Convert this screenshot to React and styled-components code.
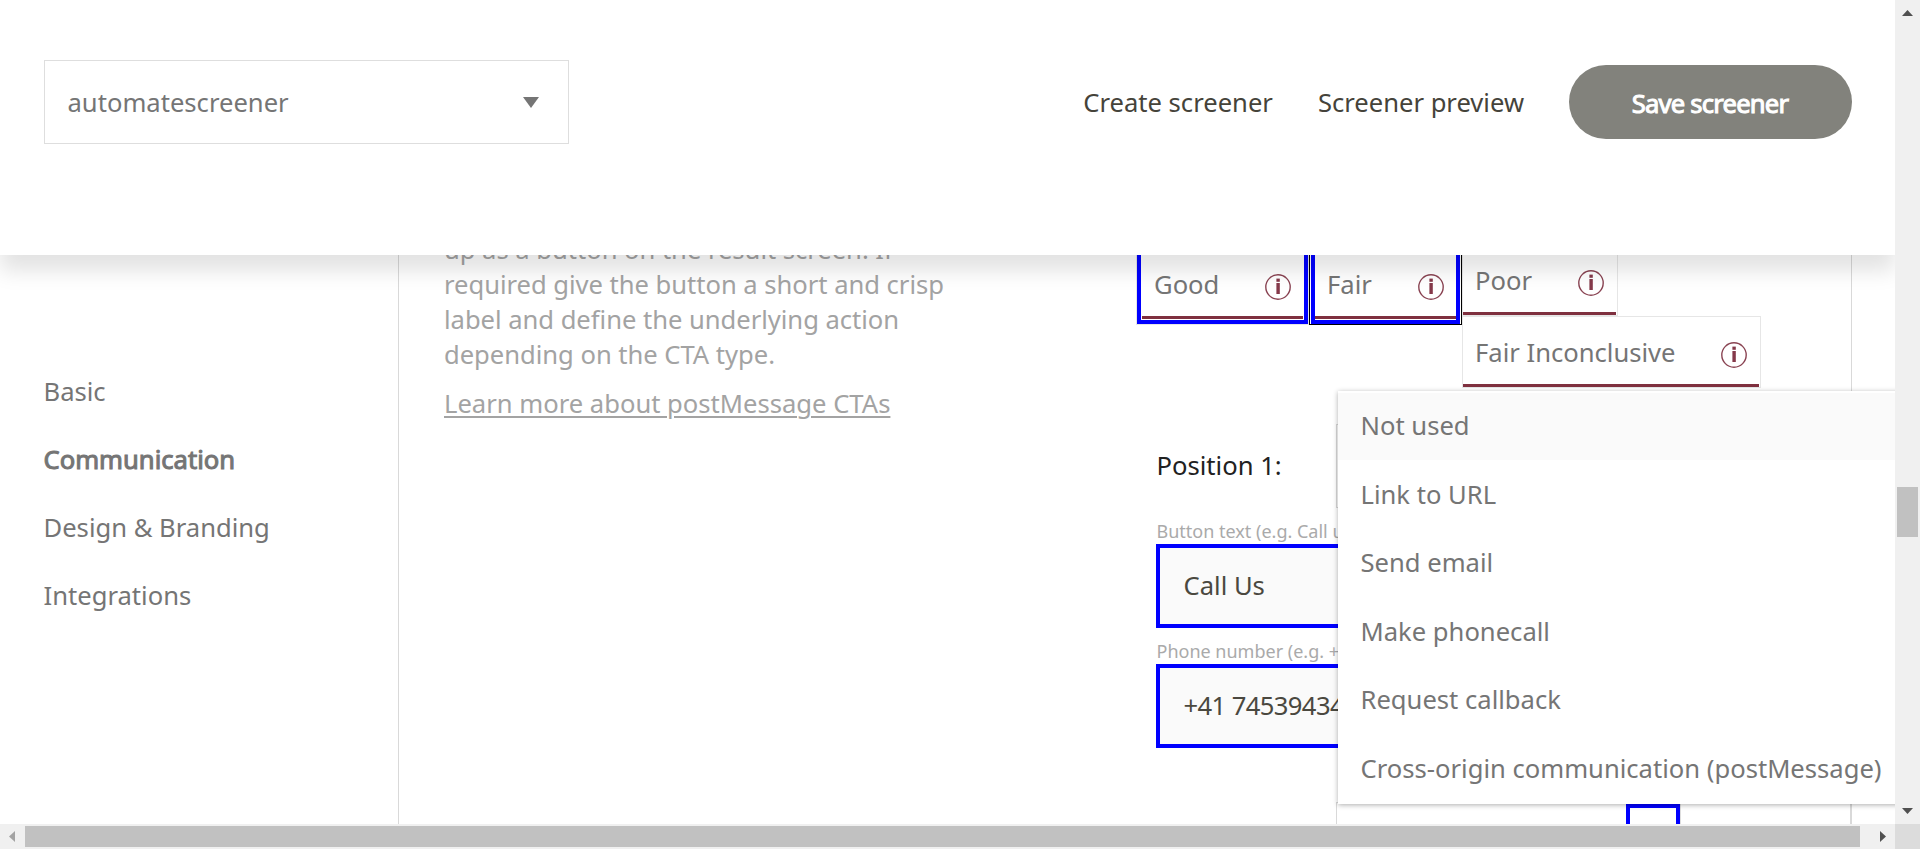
import React from "react";
import styled, { createGlobalStyle, css } from "styled-components";

const GlobalStyle = createGlobalStyle`
  * { box-sizing: border-box; }
  body {
    margin: 0;
    overflow: hidden;
    background: #fff;
    font-family: "Noto Sans", sans-serif;
    font-size: 25.6px;
    color: #757575;
  }
`;

const fauxBold = css`
  -webkit-text-stroke: 1px currentColor;
`;

const Window = styled.div`
  display: grid;
  grid-template: 824px 25px / 1895px 25px;
  width: 1920px;
  height: 849px;
`;

const Page = styled.div`
  display: flex;
  flex-direction: column;
  overflow: hidden;
`;

const Header = styled.header`
  position: relative;
  z-index: 2;
  flex: none;
  display: flex;
  align-items: flex-start;
  justify-content: space-between;
  height: 255px;
  padding: 60px 43px 0 44px;
  background: #fff;
  box-shadow: 0 16px 20px rgba(0, 0, 0, 0.115);
`;

const ScreenerSelect = styled.div`
  display: flex;
  align-items: center;
  justify-content: space-between;
  width: 525px;
  height: 84px;
  padding: 0 29px 0 22.5px;
  border: 1px solid #dedede;
`;

const Actions = styled.div`
  display: flex;
  align-items: center;
  gap: 45px;
  height: 84px;
  color: #45433a;
`;

const SaveButton = styled.button`
  width: 283px;
  height: 74px;
  padding: 2px 1px 0 0;
  border: 0;
  border-radius: 37px;
  background: #82827c;
  color: #fff;
  font: inherit;
  letter-spacing: -0.8px;
  ${fauxBold}
`;

const Body = styled.div`
  flex: 1;
  min-height: 0;
  display: flex;
`;

const Sidebar = styled.nav`
  flex: none;
  display: flex;
  flex-direction: column;
  width: 399px;
  padding: 103px 0 0 43.5px;
  border-right: 1px solid #d9d9d9;
`;

const NavItem = styled.a`
  height: 68px;
  line-height: 68px;
  ${(p) => p.$active && fauxBold}
`;

const Description = styled.section`
  flex: none;
  width: 545px;
  margin: -23px 0 0 45px;
  line-height: 35px;
  color: #a3a3a3;
`;

const Paragraph = styled.p`
  margin: 0 0 14px;
  letter-spacing: -0.03px;
  white-space: pre-line;
`;

const DocLink = styled.a`
  text-decoration: underline;
  text-decoration-thickness: 2px;
  text-underline-offset: 3px;
`;

const Content = styled.section`
  position: relative;
  flex: none;
  width: 716px;
  height: 569px;
  margin-left: 147px;
  border-right: 1px solid #d9d9d9;
`;

const ChipRow = styled.div`
  display: flex;
  align-items: flex-start;
  height: 170px;
  margin-top: -1px;
`;

const Chip = styled.div`
  flex: none;
  display: flex;
  width: ${(p) => p.$width}px;
  height: ${(p) => p.$height}px;
  border: 1px solid ${(p) => (p.$focused ? "#000" : "#e6e6e6")};
`;

const ChipBody = styled.div`
  flex: 1;
  display: flex;
  align-items: flex-end;
  justify-content: space-between;
  margin-right: ${(p) => (p.$inset ? 1 : 0)}px;
  padding: 0 11px 13px 12px;
  border-bottom: 3px solid #7f303f;
  line-height: 36px;
  white-space: nowrap;
  svg {
    flex: none;
    margin-bottom: 2px;
  }
`;

const ChipHighlight = styled.div`
  flex: 1;
  display: flex;
  margin: 0 ${(p) => p.$inset}px;
  border: 4px solid #00f;
  border-top: 0;
  padding: 0 ${(p) => p.$pad}px 1px;
`;

const ChipColumn = styled.div`
  display: flex;
  flex-direction: column;
`;

const PositionRow = styled.div`
  display: flex;
  justify-content: space-between;
  height: 84px;
  padding-left: 20.5px;
  line-height: 83px;
  color: #212121;
`;

const TypeSelect = styled.div`
  width: 515px;
  height: 84px;
  border: 1px solid #d9d9d9;
`;

const Fields = styled.div`
  display: flex;
  flex-direction: column;
  width: 450px;
  margin: 11px 0 0 20px;
`;

const Label = styled.label`
  height: 25px;
  padding-left: 0.5px;
  font-size: 18px;
  line-height: 25px;
  color: #aaa;
  white-space: nowrap;
`;

const Input = styled.div`
  height: 84px;
  margin-bottom: 11px;
  padding-left: 23.5px;
  border: 4px solid #00f;
  background: #fafafa;
  line-height: 75px;
  letter-spacing: ${(p) => (p.$numeric ? "-0.6px" : "normal")};
  color: #4a483f;
`;

const NextPosition = styled.div`
  display: flex;
  justify-content: flex-end;
  margin-top: 43px;
`;

const NextSelect = styled(TypeSelect)`
  padding: 0 0 0 289px;
`;

const Handle = styled.div`
  width: 54px;
  height: 60px;
  margin-top: 1px;
  border: 4px solid #00f;
  box-shadow: 1px 0 #dedede;
`;

const Menu = styled.ul`
  position: absolute;
  top: 136px;
  left: 202px;
  display: flex;
  flex-direction: column;
  gap: 1.5px;
  width: 575px;
  height: 413px;
  margin: 0;
  padding: 2px 0 0;
  list-style: none;
  background: #fff;
  box-shadow: 0 1px 5px rgba(0, 0, 0, 0.32);
`;

const MenuItem = styled.li`
  flex: none;
  height: 67px;
  padding-left: 22.5px;
  line-height: 65px;
  white-space: nowrap;
  background: ${(p) => (p.$active ? "#fafafa" : "transparent")};
`;

const VTrack = styled.div`
  display: flex;
  flex-direction: column;
  align-items: center;
  background: #f0f0f0;
`;

const HTrack = styled.div`
  display: flex;
  align-items: center;
  background: #f0f0f0;
`;

const VThumb = styled.div`
  width: 21px;
  height: 50px;
  margin: 462px 0 auto;
  background: #c1c1c1;
`;

const HThumb = styled.div`
  width: 1835px;
  height: 21px;
  margin-right: auto;
  background: #c1c1c1;
`;

const Corner = styled.div`
  background: #dcdcdc;
`;

const Triangle = ({ points, color = "#505050", w = 25, h = 25 }) => (
  <svg width={w} height={h}>
    <polygon points={points} fill={color} />
  </svg>
);

const InfoIcon = () => (
  <svg width="28" height="28" viewBox="0 0 28 28">
    <circle cx="14" cy="14" r="12.2" fill="none" stroke="#8a4453" strokeWidth="1.4" />
    <rect x="12.4" y="5.6" width="3.4" height="3.2" fill="#85394a" />
    <rect x="12.4" y="10" width="3.4" height="11" fill="#85394a" />
  </svg>
);

const ChipContent = ({ label, inset }) => (
  <ChipBody $inset={inset}>
    <span>{label}</span>
    <InfoIcon />
  </ChipBody>
);

const NAV = ["Basic", "Communication", "Design & Branding", "Integrations"];
const OPTIONS = [
  "Not used",
  "Link to URL",
  "Send email",
  "Make phonecall",
  "Request callback",
  "Cross-origin communication (postMessage)",
];

export default function App() {
  return (
    <>
      <GlobalStyle />
      <Window>
        <Page>
          <Header>
            <ScreenerSelect>
              <span>automatescreener</span>
              <Triangle points="0,0 16,0 8,11" color="#757575" w={16} h={11} />
            </ScreenerSelect>
            <Actions>
              <span>Create screener</span>
              <span>Screener preview</span>
              <SaveButton>Save screener</SaveButton>
            </Actions>
          </Header>
          <Body>
            <Sidebar>
              {NAV.map((name) => (
                <NavItem key={name} $active={name === "Communication"}>
                  {name}
                </NavItem>
              ))}
            </Sidebar>
            <Description>
              <Paragraph>
                {"up as a button on the result screen. If\nrequired give the button a short and crisp\nlabel and define the underlying action\ndepending on the CTA type."}
              </Paragraph>
              <DocLink>Learn more about postMessage CTAs</DocLink>
            </Description>
            <Content>
              <ChipRow>
                <Chip $width={173} $height={71}>
                  <ChipHighlight $inset={0} $pad={1}>
                    <ChipContent label="Good" />
                  </ChipHighlight>
                </Chip>
                <Chip $width={153} $height={71} $focused>
                  <ChipHighlight $inset={1} $pad={0}>
                    <ChipContent label="Fair" />
                  </ChipHighlight>
                </Chip>
                <ChipColumn>
                  <Chip $width={156} $height={62}>
                    <ChipContent label="Poor" inset />
                  </Chip>
                  <Chip $width={299} $height={72}>
                    <ChipContent label="Fair Inconclusive" inset />
                  </Chip>
                </ChipColumn>
              </ChipRow>
              <PositionRow>
                <span>Position 1:</span>
                <TypeSelect />
              </PositionRow>
              <Fields>
                <Label>Button text (e.g. Call us)</Label>
                <Input>Call Us</Input>
                <Label>Phone number (e.g. +41)</Label>
                <Input $numeric>+41 745394343</Input>
              </Fields>
              <NextPosition>
                <NextSelect>
                  <Handle />
                </NextSelect>
              </NextPosition>
              <Menu>
                {OPTIONS.map((name, i) => (
                  <MenuItem key={name} $active={i === 0}>
                    {name}
                  </MenuItem>
                ))}
              </Menu>
            </Content>
          </Body>
        </Page>
        <VTrack>
          <Triangle points="7,16 18,16 12.5,10" />
          <VThumb />
          <Triangle points="7,9 18,9 12.5,15" />
        </VTrack>
        <HTrack>
          <Triangle points="15,7 15,18 9,12.5" color="#a3a3a3" />
          <HThumb />
          <Triangle points="10,7 10,18 16,12.5" />
        </HTrack>
        <Corner />
      </Window>
    </>
  );
}
